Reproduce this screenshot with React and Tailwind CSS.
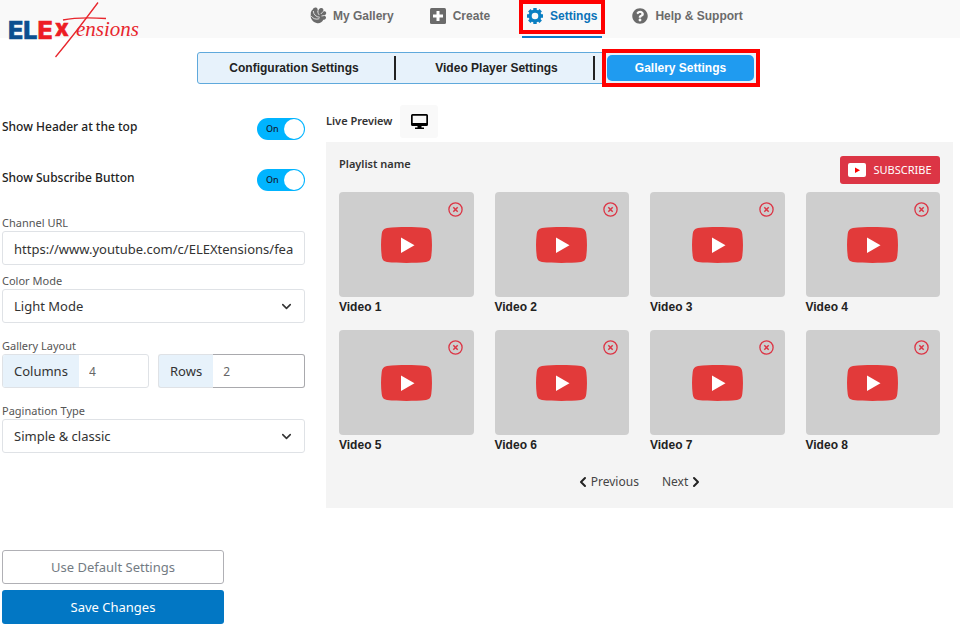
import { useState } from "react";
import { FaQuestionCircle } from "react-icons/fa";
import { LuChevronDown, LuChevronLeft, LuChevronRight } from "react-icons/lu";

const videos = ["Video 1", "Video 2", "Video 3", "Video 4", "Video 5", "Video 6", "Video 7", "Video 8"];

const Logo = () => (
  <svg className="h-[60px] w-[146px] shrink-0" viewBox="0 0 146 60" role="img" aria-label="ELEXtensions">
    <text x="8" y="39" fontSize="25" fontWeight="800" fontFamily="Inter, sans-serif" fill="#0b4f8f" stroke="#0b4f8f" strokeWidth=".6">
      EL<tspan fill="#ed1c24" stroke="#ed1c24">E</tspan>
    </text>
    <text x="55" y="36" fontSize="23" fontWeight="800" fontFamily="Inter, sans-serif" fill="#ed1c24" stroke="#ed1c24" strokeWidth=".6">
      x
    </text>
    <path d="M98 2.5 C85 20 68 42 55.500 57" fill="none" stroke="#e8262d" strokeWidth="1.300" />
    <path d="M63 20 C75 17.500 90 17.500 106 18.500" fill="none" stroke="#e8262d" strokeWidth="1.300" />
    <text x="76" y="36" fontSize="21" fontStyle="italic" fontFamily="'Liberation Serif', serif" fill="#e8262d">
      ensions
    </text>
  </svg>
);

const GalleryIcon = () => (
  <svg className="size-[17px]" viewBox="0 0 17 17" aria-hidden="true">
    <path
      d="M2.800 2.600 C3.300 .3 6.500 -.3 7.500 1.800 L8 5 C8.200 3 9.500 .8 11.500 1 C13.500 1.200 13.800 3 13 4.600 C14.500 4 16.300 4.500 16.200 6.200 C16.100 7.600 14.800 8.300 13.600 8.600 C15.200 8.800 16.400 9.800 15.900 11.300 C15.500 12.600 14.300 12.800 13.300 12.800 C12 15.500 9.500 16.700 6.500 16 C2.500 15 .2 11.500 .8 8 C.5 5.500 1.300 3.800 2.800 2.600Z"
      fill="#6b6b6b"
    />
    <path
      d="M3.300 4 C3.500 7.500 6 10 9.800 10.300 M1.200 9 C3 11.800 6 12.800 9.300 11.700 M7.800 3.800 C7.800 5.800 8.300 7 9.300 8 M13.300 4.300 L10.800 7 M14.300 8.500 L11.500 9"
      fill="none"
      stroke="#f9f9f9"
      strokeWidth=".8"
    />
  </svg>
);

const PlusIcon = () => (
  <svg className="size-[16px]" viewBox="0 0 16 16" aria-hidden="true">
    <rect width="16" height="16" rx="1.500" fill="#6b6b6b" />
    <path d="M8 3V13M3 8H13" stroke="#fff" strokeWidth="3" />
  </svg>
);

const GearIcon = () => (
  <svg className="size-[16px]" viewBox="0 0 16 16" fill="none" stroke="#0a7fc2" aria-hidden="true">
    <circle cx="8" cy="8" r="4.900" strokeWidth="3.200" />
    <path
      d="M8 0V2.500M8 13.500V16M0 8H2.500M13.500 8H16M2.300 2.300L4 4M12 12L13.700 13.700M2.300 13.700L4 12M12 4L13.700 2.300"
      strokeWidth="3.400"
    />
  </svg>
);

const MonitorIcon = () => (
  <svg className="h-[15px] w-[17px]" viewBox="0 0 17 15" aria-hidden="true">
    <path fillRule="evenodd" d="M1.500 0H15.500Q17 0 17 1.500V10.500Q17 12 15.500 12H10.500V13.500H13V15H4V13.500H6.500V12H1.500Q0 12 0 10.500V1.500Q0 0 1.500 0ZM1.700 1.700V9H15.300V1.700Z" />
  </svg>
);

const PlayIcon = () => (
  <svg className="h-[36px] w-[51px]" viewBox="0 0 51 36" aria-hidden="true">
    <path
      d="M6 1 C18 -.2 33 -.2 45 1 C48.500 1.500 50 3.500 50.300 7 C51.200 14 51.200 22 50.300 29 C50 32.500 48.500 34.500 45 35 C33 36.200 18 36.200 6 35 C2.500 34.500 1 32.500 .7 29 C-.2 22 -.2 14 .7 7 C1 3.500 2.500 1.500 6 1Z"
      fill="#e23a3a"
    />
    <path d="M20 10.500V26L33.500 18.200Z" fill="#fff" />
  </svg>
);

const RemoveIcon = () => (
  <svg className="size-[15px]" viewBox="0 0 15 15" fill="none" stroke="#dc3545" aria-hidden="true">
    <circle cx="7.500" cy="7.500" r="6.600" strokeWidth="1.300" />
    <path d="M5.300 5.300L9.700 9.700M9.700 5.300L5.300 9.700" strokeWidth="1.500" />
  </svg>
);

const Toggle = ({ id, label }) => {
  const [on, setOn] = useState(true);

  return (
    <div className="flex h-[22px] items-start justify-between">
      <label htmlFor={id} className="text-[12px] leading-[18px] font-medium text-[#222]">
        {label}
      </label>
      <span className="relative h-[22px] w-[48px]">
        <input
          id={id}
          type="checkbox"
          checked={on}
          onChange={() => setOn(!on)}
          className="peer block h-full w-full appearance-none rounded-full bg-gray-300 checked:bg-[#00b4ff]"
        />
        <span className="pointer-events-none absolute top-[1px] left-[1px] size-5 rounded-full bg-white peer-checked:left-[27px]" />
        {on && (
          <span className="pointer-events-none absolute top-[3px] left-[9px] text-[9px] leading-4 font-medium text-[#123]">On</span>
        )}
      </span>
    </div>
  );
};

const SelectField = ({ id, label, options }) => (
  <div>
    <label htmlFor={id} className="block pt-[2px] text-[11px] leading-4 text-[#555]">
      {label}
    </label>
    <div className="relative">
      <select
        id={id}
        className="block h-[34px] w-full appearance-none rounded-[3px] border border-[#dfe2e6] bg-white px-[11px] pt-[2px] text-[13px] text-[#333]"
      >
        {options.map((option) => (
          <option key={option}>{option}</option>
        ))}
      </select>
      <LuChevronDown className="pointer-events-none absolute top-[10px] right-[11px] size-[15px] text-[#333]" strokeWidth={2.5} />
    </div>
  </div>
);

const navLink = "flex h-[31px] items-center text-[12px] font-bold text-[#6b6b6b]";

const Header = () => (
  <header className="flex h-[38px] items-start bg-[#f9f9f9]">
    <Logo />
    <nav className="ml-[164px] flex items-start">
      <a href="#gallery" className={`${navLink} gap-[6px]`}>
        <GalleryIcon /> My Gallery
      </a>
      <a href="#create" className={`${navLink} ml-9 gap-[7px]`}>
        <PlusIcon /> Create
      </a>
      <a
        href="#settings"
        className="relative ml-8 flex h-[38px] items-start border-b-2 border-[#0a7ac8] px-[5px] text-[12px] font-bold text-[#0a72b8]"
      >
        <span className="flex h-[31px] items-center gap-[7px]">
          <GearIcon /> Settings
        </span>
        <span className="absolute -inset-x-[3px] top-0 h-[34px] border-4 border-[#ff0000]" />
      </a>
      <a href="#help" className={`${navLink} ml-[30px] gap-[7px]`}>
        <FaQuestionCircle className="size-[16px]" /> Help &amp; Support
      </a>
    </nav>
  </header>
);

const Tabs = () => (
  <div className="mt-[14px] flex justify-center pr-1">
    <div className="flex h-8 w-[562px] items-center rounded-[3px] border border-[#5fa9dc] bg-[#e7f2fb] text-[12px] font-bold text-[#222]">
      <button type="button" className="h-6 w-[198px] border-r-2 border-[#222] pr-1">
        Configuration Settings
      </button>
      <button type="button" className="h-6 w-[199px] border-r-2 border-[#222] pl-1">
        Video Player Settings
      </button>
      <div className="relative flex-1 pr-[4px] pl-[12px]">
        <button type="button" className="h-[26px] w-full rounded-[5px] bg-[#1f9bf0] text-white">
          Gallery Settings
        </button>
        <span className="absolute -top-[6px] -right-[2px] left-[7px] h-[38px] border-4 border-[#ff0000]" />
      </div>
    </div>
  </div>
);

const SettingsForm = () => {
  const [url, setUrl] = useState("https://www.youtube.com/c/ELEXtensions/featured");

  return (
    <form className="w-[303px] shrink-0 pt-[13px]" onSubmit={(e) => e.preventDefault()}>
      <div className="flex flex-col gap-[29px]">
        <Toggle id="show-header" label="Show Header at the top" />
        <Toggle id="show-subscribe" label="Show Subscribe Button" />
      </div>

      <div className="mt-[22px]">
        <label htmlFor="channel" className="block pt-[2px] text-[11px] leading-4 text-[#555]">
          Channel URL
        </label>
        <input
          id="channel"
          type="text"
          value={url}
          onChange={({ target }) => setUrl(target.value)}
          className="block h-[34px] w-full rounded-[3px] border border-[#dfe2e6] px-[11px] pt-[2px] text-[13px] text-[#333]"
        />
      </div>

      <div className="mt-[6px]">
        <SelectField id="mode" label="Color Mode" options={["Light Mode", "Dark Mode"]} />
      </div>

      <fieldset className="mt-[13px]">
        <legend className="pt-[2px] text-[11px] leading-4 text-[#555]">Gallery Layout</legend>
        <div className="flex gap-[9px]">
          <div className="flex h-[34px] w-[147px] overflow-hidden rounded-[3px] border border-[#dfe2e6]">
            <label htmlFor="columns" className="flex items-center bg-[#e7f2fb] px-[11px] pt-[2px] text-[13px] text-[#333]">
              Columns
            </label>
            <input id="columns" type="text" defaultValue="4" className="w-0 flex-1 px-[10px] pt-[2px] text-[12px] text-[#666]" />
          </div>
          <div className="flex h-[34px] w-[147px]">
            <label
              htmlFor="rows"
              className="flex items-center rounded-l-[3px] border border-r-0 border-[#dfe2e6] bg-[#e7f2fb] px-[11px] pt-[2px] text-[13px] text-[#333]"
            >
              Rows
            </label>
            <input
              id="rows"
              type="text"
              defaultValue="2"
              className="w-0 flex-1 rounded-r-[3px] border border-l-0 border-[#a9a9ad] px-[10px] pt-[2px] text-[12px] text-[#666]"
            />
          </div>
        </div>
      </fieldset>

      <div className="mt-[13px]">
        <SelectField id="pagination" label="Pagination Type" options={["Simple & classic", "Load more"]} />
      </div>

      <div className="mt-[97px] flex w-[222px] flex-col gap-[6px] text-[13px]">
        <button type="button" className="h-[34px] rounded-[3px] border border-[#b0b0b5] pt-[2px] text-[#737b83]">
          Use Default Settings
        </button>
        <button type="submit" className="h-[34px] rounded-[3px] bg-[#0277c4] pt-[2px] text-white">
          Save Changes
        </button>
      </div>
    </form>
  );
};

const VideoCard = ({ title }) => (
  <li>
    <div className="relative flex h-[105px] items-center justify-center rounded-[4px] bg-[#cecece]">
      <PlayIcon />
      <button type="button" aria-label={`Remove ${title}`} className="absolute top-[10px] right-[11px]">
        <RemoveIcon />
      </button>
    </div>
    <p className="font-['Liberation_Sans',sans-serif] text-[12px] leading-5 font-bold text-[#222]">{title}</p>
  </li>
);

const Preview = () => (
  <section className="min-w-0 flex-1">
    <div className="flex h-[33px] items-center gap-2">
      <h2 className="text-[11px] font-semibold text-[#333]">Live Preview</h2>
      <button type="button" aria-label="Desktop preview" className="flex h-[33px] w-[38px] items-center justify-center rounded-[3px] bg-[#f9f9f9]">
        <MonitorIcon />
      </button>
    </div>

    <div className="mt-1 bg-[#f4f4f4] px-[13px] pt-[14px] pb-4">
      <div className="flex items-start justify-between">
        <h3 className="text-[11px] leading-4 font-semibold text-[#333]">Playlist name</h3>
        <button type="button" className="flex h-7 w-[100px] items-center justify-center gap-[7px] rounded-[3px] bg-[#dc3545] text-[11px] text-white">
          <svg className="h-[14px] w-[18px]" viewBox="0 0 18 14" aria-hidden="true">
            <rect width="18" height="14" rx="2" fill="#fff" />
            <path d="M7 4.500V10L12 7.200Z" fill="#f00" />
          </svg>
          SUBSCRIBE
        </button>
      </div>

      <ul className="mt-2 grid grid-cols-4 gap-x-[21px] gap-y-[13px]">
        {videos.map((title) => (
          <VideoCard key={title} title={title} />
        ))}
      </ul>

      <div className="mt-[17px] flex h-5 items-center justify-center gap-[23px] text-[12px] text-[#444]">
        <button type="button" className="flex items-center">
          <LuChevronLeft className="size-4 text-[#222]" strokeWidth={3} />
          Previous
        </button>
        <button type="button" className="flex items-center">
          Next
          <LuChevronRight className="size-4 text-[#222]" strokeWidth={3} />
        </button>
      </div>
    </div>
  </section>
);

const App = () => {
  return (
    <div className="min-h-screen bg-white font-['Liberation_Sans',sans-serif]">
      <Header />
      <Tabs />
      <main className="flex gap-[21px] pt-[21px] pr-[7px] pb-4 pl-[2px] font-['Noto_Sans',sans-serif]">
        <SettingsForm />
        <Preview />
      </main>
    </div>
  );
};

export default App;
